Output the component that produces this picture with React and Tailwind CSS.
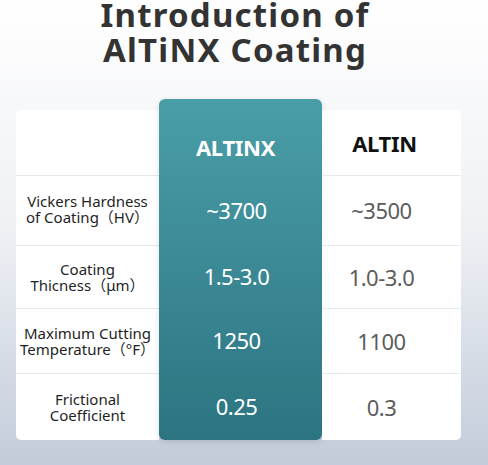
export default function App() {
  const rows = [
    { label: ["Vickers Hardness", "of Coating（HV）"], a: "~3700", b: "~3500", h: "h-[70px]" },
    { label: ["Coating", "Thicness（μm）"], a: "1.5-3.0", b: "1.0-3.0", h: "h-[63px]" },
    { label: ["Maximum Cutting", "Temperature（°F）"], a: "1250", b: "1100", h: "h-[65px]" },
    { label: ["Frictional", "Coefficient"], a: "0.25", b: "0.3", h: "h-[67px]" },
  ];
  const font = { fontFamily: '"Noto Sans", "Noto Sans CJK SC", sans-serif' };
  return (
    <div
      className="w-[488px] h-[465px] overflow-hidden bg-gradient-to-b from-[#ffffff] via-[#eef0f4] to-[#c2ccda]"
      style={font}
    >
      <div className="pr-[18px] -mt-[3px] text-center text-[33px] leading-[35px] tracking-[1.2px] font-bold text-[#333333]">
        <div>Introduction of</div>
        <div>AlTiNX Coating</div>
      </div>
      <div className="mt-[32px] ml-[16px] flex items-end">
        {/* label column */}
        <div className="w-[143px] bg-white rounded-l-[5px] flex flex-col">
          <div className="h-[65px]" />
          {rows.map((r, i) => (
            <div
              key={i}
              className={`${r.h} border-t border-[#e7e9ed] flex flex-col items-center justify-center text-[15px] leading-[16px] text-[#1f1f1f] whitespace-nowrap ${i === 0 ? "pb-[4px]" : ""}`}
            >
              <div>{r.label[0]}</div>
              <div>{r.label[1]}</div>
            </div>
          ))}
        </div>
        {/* teal column */}
        <div className="w-[163px] rounded-[6px] bg-gradient-to-b from-[#4a9ea8] to-[#2c7481] flex flex-col text-white shadow-[0_2px_6px_rgba(0,0,0,0.12)]">
          <div className="h-[76px] flex items-center justify-center pt-[20px] pr-[10px] text-[22px] tracking-[-0.3px] font-bold">ALTINX</div>
          {rows.map((r, i) => (
            <div key={i} className={`${r.h} flex items-center justify-center pr-[8px] text-[22px] tracking-[-0.5px] font-normal`}>
              {r.a}
            </div>
          ))}
        </div>
        {/* altin column */}
        <div className="w-[139px] bg-white rounded-r-[5px] flex flex-col">
          <div className="h-[65px] flex items-center justify-center pt-[2px] pr-[14px] text-[22px] tracking-[-0.3px] font-bold text-[#111111]">ALTIN</div>
          {rows.map((r, i) => (
            <div
              key={i}
              className={`${r.h} border-t border-[#e7e9ed] flex items-center justify-center pr-[20px] text-[22px] tracking-[-0.5px] font-normal text-[#5c5c5c]`}
            >
              {r.b}
            </div>
          ))}
        </div>
      </div>
    </div>
  );
}
